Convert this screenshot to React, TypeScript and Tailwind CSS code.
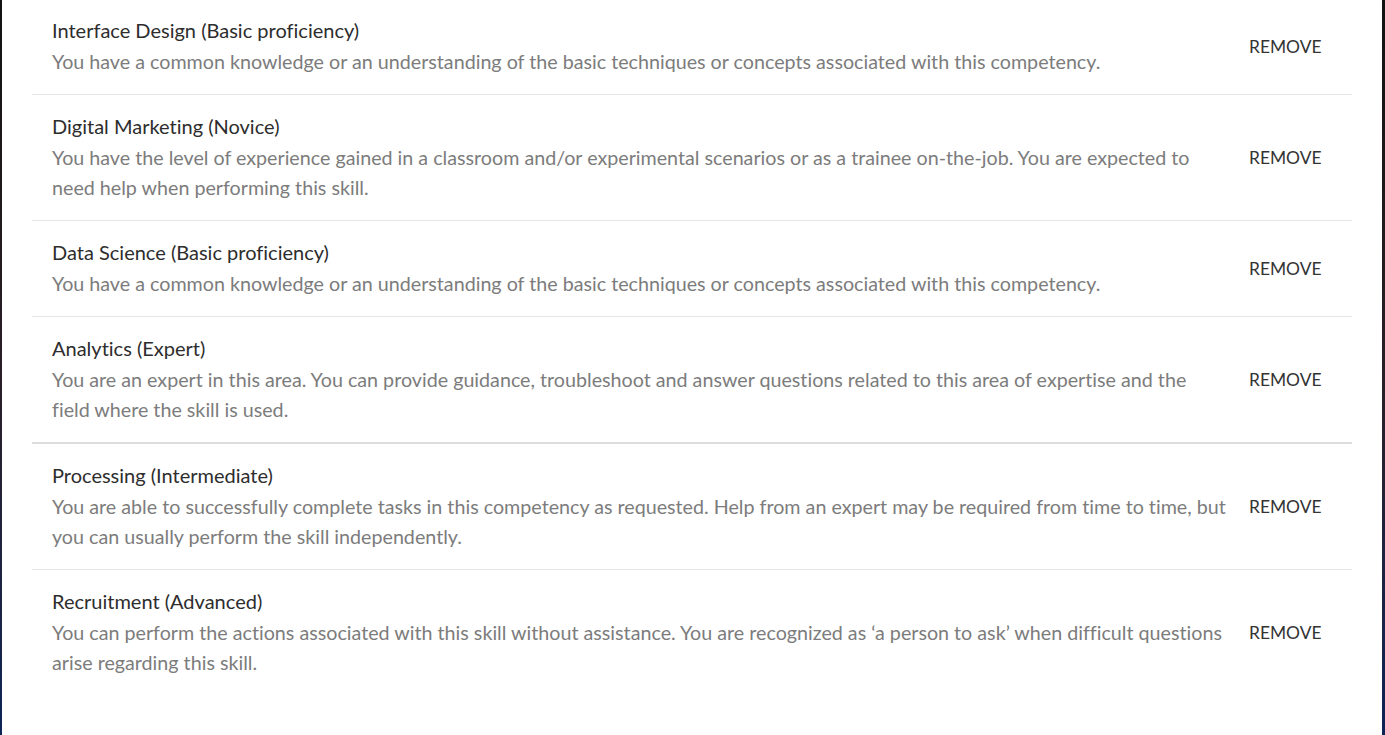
const skills = [
  {
    name: 'Interface Design (Basic proficiency)',
    desc: 'You have a common knowledge or an understanding of the basic techniques or concepts associated with this competency.',
  },
  {
    name: 'Digital Marketing (Novice)',
    desc: 'You have the level of experience gained in a classroom and/or experimental scenarios or as a trainee on-the-job. You are expected to need help when performing this skill.',
  },
  {
    name: 'Data Science (Basic proficiency)',
    desc: 'You have a common knowledge or an understanding of the basic techniques or concepts associated with this competency.',
  },
  {
    name: 'Analytics (Expert)',
    desc: 'You are an expert in this area. You can provide guidance, troubleshoot and answer questions related to this area of expertise and the field where the skill is used.',
    thick: true,
  },
  {
    name: 'Processing (Intermediate)',
    desc: 'You are able to successfully complete tasks in this competency as requested. Help from an expert may be required from time to time, but you can usually perform the skill independently.',
  },
  {
    name: 'Recruitment (Advanced)',
    desc: 'You can perform the actions associated with this skill without assistance. You are recognized as \u2018a person to ask\u2019 when difficult questions arise regarding this skill.',
  },
];

export default function App() {
  return (
    <div className="h-[735px] overflow-hidden bg-gradient-to-b from-[#121212] via-[#2a1e26] to-[#0d2456] pl-[2px] pr-[3px] font-['Lato','Open_Sans',sans-serif] [font-variant-ligatures:none]">
      <div className="h-full bg-white px-[30px]">
        {skills.map((s, i) => (
          <div
            key={s.name}
            className={`flex items-center gap-[20px] pl-[20px] pr-[31px] ${i === 0 ? 'pt-[17px]' : 'pt-[18px]'} pb-[17px] ${
              i === skills.length - 1 ? '' : s.thick ? 'border-b-2 border-[#dcdcdc]' : 'border-b border-[#e6e6e6]'
            }`}
          >
            <div className="w-[1177px] shrink-0">
              <div className="pb-[4px] text-[20px] leading-[26px] text-[#2d2d2d]">{s.name}</div>
              <p className="text-[19.7px] leading-[30px] text-[#7c7c7c]">{s.desc}</p>
            </div>
            <button className="text-[17.4px] leading-[30px] text-[#333]">REMOVE</button>
          </div>
        ))}
      </div>
    </div>
  );
}
